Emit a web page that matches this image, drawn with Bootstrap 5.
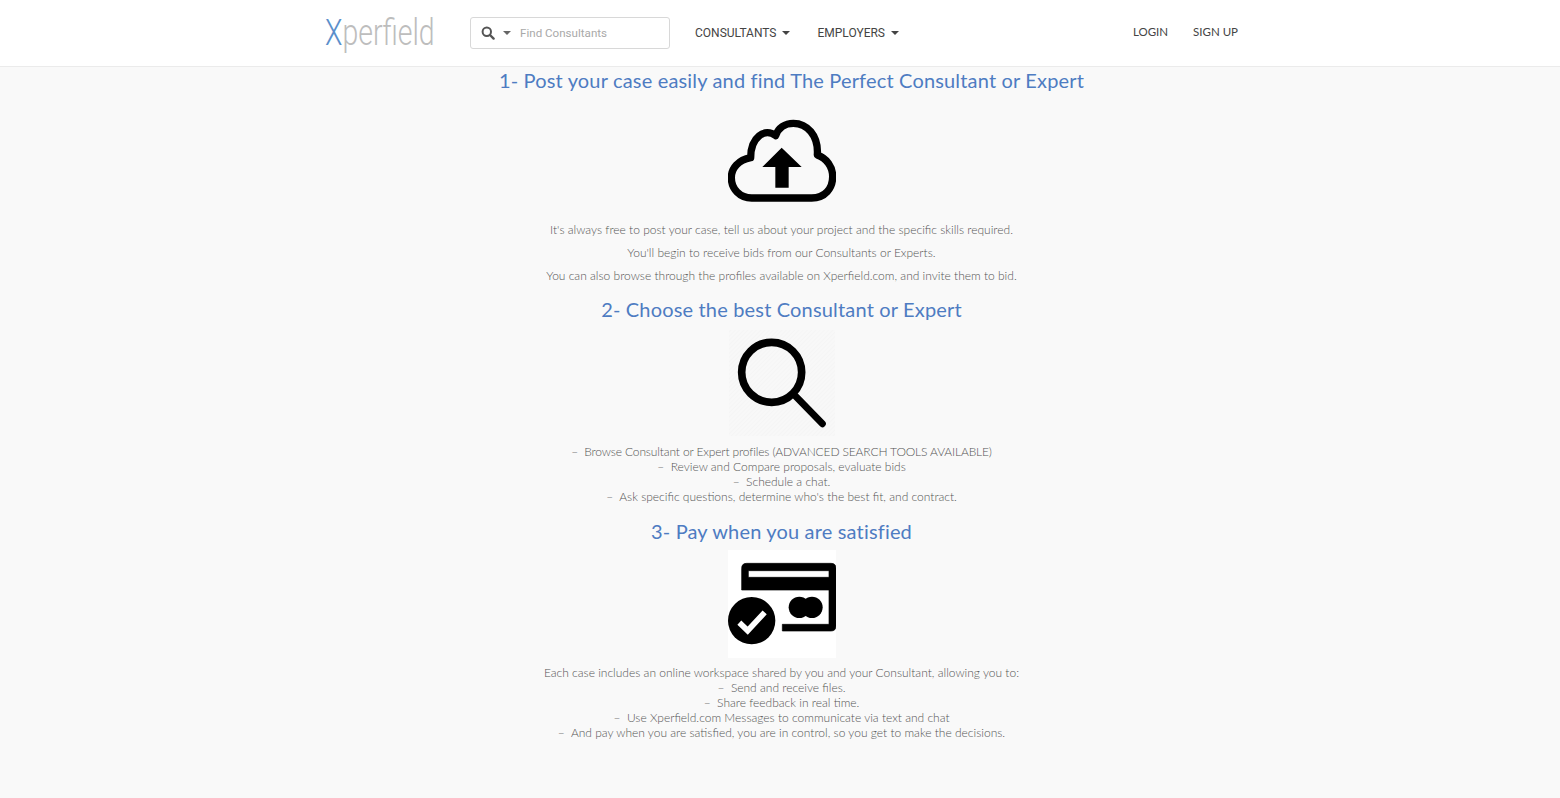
<!DOCTYPE html>
<html lang="en">
<head>
    <meta charset="UTF-8">
    <meta name="viewport" content="width=device-width, initial-scale=1.0">
    <title>Xperfield</title>
    <link href="https://cdn.jsdelivr.net/npm/bootstrap@5.3.0/dist/css/bootstrap.min.css" rel="stylesheet">
    <style>
        body {
            background: #f9f9f9;
            font-family: "Lato", "Liberation Sans", sans-serif;
            color: #666;
        }

        /* Header */
        .top-bar {
            height: 67px;
            background: #fff;
            border-bottom: 1px solid #ebebeb;
            padding: 0;
        }

        .top-inner {
            width: 913px;
            height: 66px;
            margin-left: 325px;
        }

        .brand-logo {
            width: 145px;
            font-family: "Roboto", sans-serif;
            font-weight: 300;
            font-size: 36px;
            line-height: 1;
            color: #bdbdbd;
            padding: 0;
            margin: 0;
            transform: scaleX(0.79);
            transform-origin: left center;
        }

        .brand-logo span {
            color: #5b8fcb;
        }

        .search-box {
            width: 200px;
            height: 32px;
            border: 1px solid #d8d8d8;
            border-radius: 3px;
            padding-left: 10px;
            font-family: "Roboto", sans-serif;
            font-size: 11.6px;
            color: #a9a9a9;
        }

        .search-hint {
            margin-top: 1px;
        }

        .caret-down {
            display: inline-block;
            border-top: 4px solid #444;
            border-left: 4px solid transparent;
            border-right: 4px solid transparent;
        }

        .search-box .caret-down {
            border-top-color: #666;
            margin: 0 5px 0 8px;
        }

        .top-link {
            font-family: "Roboto", sans-serif;
            font-size: 12px;
            color: #444;
            text-decoration: none;
        }

        .top-link .caret-down {
            margin-left: 3px;
            vertical-align: 2px;
        }

        .nav-one {
            margin-left: 25px;
        }

        .nav-two {
            margin-left: 27px;
        }

        .auth-link {
            font-family: "Lato", sans-serif;
            font-size: 11.5px;
            margin-top: -2px;
        }

        .auth-gap {
            margin-left: 25px;
        }

        /* How it works */
        .steps {
            padding-left: 3px;
            font-size: 12px;
            line-height: 15px;
            font-weight: 300;
            color: #555;
        }

        .step-title {
            font-family: "Lato", sans-serif;
            font-size: 20px;
            line-height: 22px;
            font-weight: 400;
            letter-spacing: 0.17px;
            color: #4e7cc2;
            margin: 0;
        }

        .step-title.first {
            margin-top: 2px;
            padding-left: 20px;
        }

        .step-title.later {
            margin-top: 15.5px;
        }

        .step-icon {
            display: block;
            margin-left: auto;
            margin-right: auto;
        }

        .icon-one {
            margin-top: 17px;
        }

        .icon-two {
            margin-top: 10px;
        }

        .icon-three {
            margin-top: 8px;
        }

        .step-text {
            margin: 0 0 8px;
        }

        .step-text.lead-in {
            margin-top: 5.5px;
        }

        .step-list {
            margin: 0;
        }

        .step-list.list-two {
            margin-top: 8px;
        }

        .step-list.list-three {
            margin-top: 7.5px;
        }

        .tight-line {
            letter-spacing: -0.14px;
        }
    </style>
</head>
<body>
    <nav class="navbar top-bar">
        <div class="top-inner d-flex align-items-center">
            <a class="navbar-brand brand-logo"><span>X</span>perfield</a>
            <div class="search-box d-flex align-items-center">
                <svg width="14" height="14" viewBox="0 0 14 14"><circle cx="5.8" cy="5.8" r="4.2" fill="none" stroke="#555" stroke-width="2"/><path d="M9 9l3.6 3.6" stroke="#555" stroke-width="2.4" stroke-linecap="round"/></svg>
                <span class="caret-down"></span>
                <span class="ms-1 search-hint">Find Consultants</span>
            </div>
            <a class="top-link nav-one" href="#">CONSULTANTS <span class="caret-down"></span></a>
            <a class="top-link nav-two" href="#">EMPLOYERS <span class="caret-down"></span></a>
            <a class="top-link auth-link ms-auto" href="#">LOGIN</a>
            <a class="top-link auth-link auth-gap" href="#">SIGN UP</a>
        </div>
    </nav>

    <main class="steps text-center">
        <h2 class="step-title first">1- Post your case easily and find The Perfect Consultant or Expert</h2>
        <svg class="step-icon icon-one" width="108" height="108" viewBox="54 9 324 324">
            <path d="M125 279H305C345 279 368 250 368 215C368 185 350 160 322 150C326 90 290 55 250 55C225 55 205 68 197 92C165 68 122 95 122 158C85 165 64 190 64 218C64 252 90 279 125 279Z" fill="none" stroke="#000" stroke-width="22" stroke-linejoin="round"/>
            <path d="M215 128L275 186H236V248H196V186H157Z" fill="#000"/>
        </svg>
        <p class="step-text lead-in">It's always free to post your case, tell us about your project and the specific skills required.</p>
        <p class="step-text">You'll begin to receive bids from our Consultants or Experts.</p>
        <p class="step-text">You can also browse through the profiles available on Xperfield.com, and invite them to bid.</p>

        <h2 class="step-title later">2- Choose the best Consultant or Expert</h2>
        <svg class="step-icon icon-two" width="106" height="106" viewBox="57 15 318 318">
            <defs>
                <pattern id="hatch" width="9" height="9" patternUnits="userSpaceOnUse" patternTransform="rotate(45)">
                    <rect width="9" height="9" fill="#f8f8f8"/>
                    <rect width="3" height="9" fill="#f5f5f5"/>
                </pattern>
            </defs>
            <rect x="57" y="15" width="318" height="318" fill="url(#hatch)"/>
            <circle cx="185" cy="142" r="90" fill="none" stroke="#000" stroke-width="23"/>
            <path d="M258 215L337 296" stroke="#000" stroke-width="21" stroke-linecap="round"/>
        </svg>
        <div class="step-list list-two">
            <div class="tight-line">&ndash;&nbsp; Browse Consultant or Expert profiles (ADVANCED SEARCH TOOLS AVAILABLE)</div>
            <div>&ndash;&nbsp; Review and Compare proposals, evaluate bids</div>
            <div>&ndash;&nbsp; Schedule a chat.</div>
            <div>&ndash;&nbsp; Ask specific questions, determine who's the best fit, and contract.</div>
        </div>

        <h2 class="step-title later">3- Pay when you are satisfied</h2>
        <svg class="step-icon icon-three" width="108" height="108" viewBox="54 15 324 324">
            <rect x="54" y="15" width="324" height="324" fill="#fff"/>
            <path fill-rule="evenodd" d="M110 55H363Q378 55 378 70V243Q378 258 363 258H217V238H357V135H95V70Q95 55 110 55ZM115 77V97H357V77Z" fill="#000" stroke="#000" stroke-width="2"/>
            <circle cx="268" cy="187" r="32" fill="#000"/>
            <circle cx="306" cy="187" r="32" fill="#000"/>
            <circle cx="125" cy="227" r="71" fill="#000"/>
            <path d="M88 233L113 257L164 202" fill="none" stroke="#fff" stroke-width="17"/>
        </svg>
        <div class="step-list list-three">
            <div>Each case includes an online workspace shared by you and your Consultant, allowing you to:</div>
            <div>&ndash;&nbsp; Send and receive files.</div>
            <div>&ndash;&nbsp; Share feedback in real time.</div>
            <div>&ndash;&nbsp; Use Xperfield.com Messages to communicate via text and chat</div>
            <div>&ndash;&nbsp; And pay when you are satisfied, you are in control, so you get to make the decisions.</div>
        </div>
    </main>

    <script src="https://cdn.jsdelivr.net/npm/bootstrap@5.3.0/dist/js/bootstrap.bundle.min.js"></script>
</body>
</html>
